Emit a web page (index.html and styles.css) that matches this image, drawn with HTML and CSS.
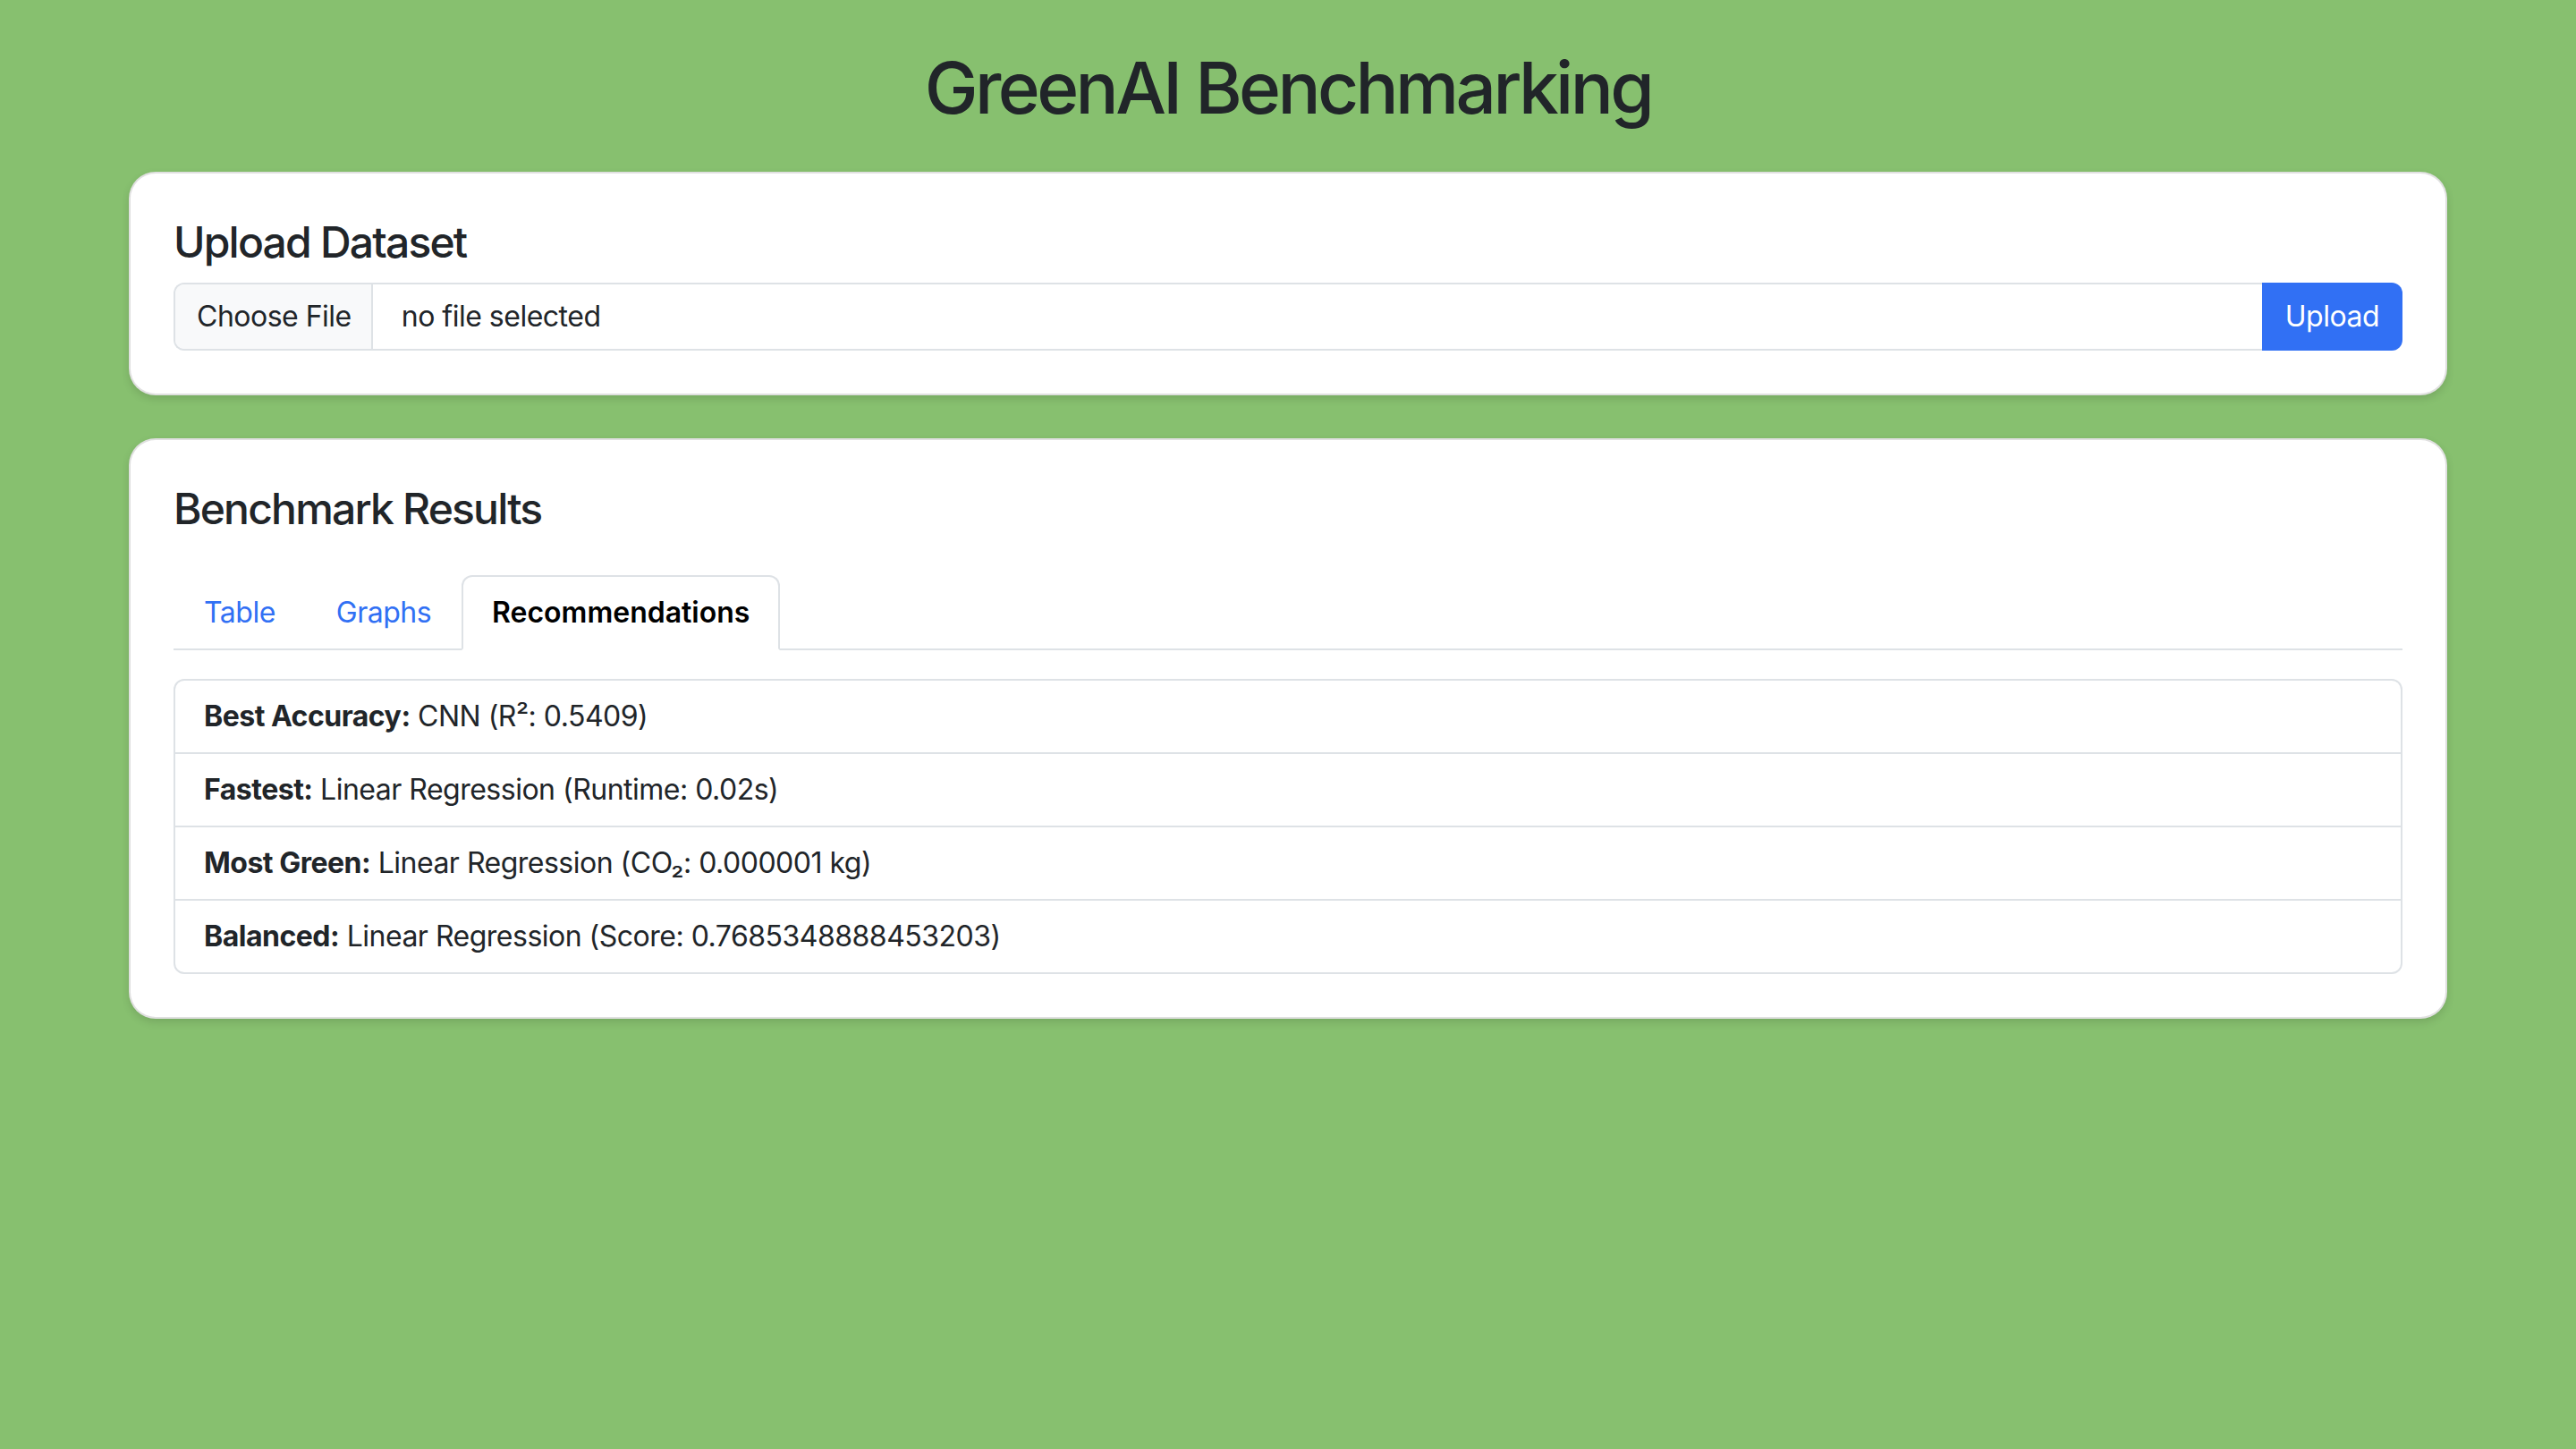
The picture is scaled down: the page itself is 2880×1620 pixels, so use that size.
FILE: index.html
```html
<!DOCTYPE html>
<html lang="en">
<head>
<meta charset="utf-8">
<title>GreenAI Benchmarking</title>
<link rel="stylesheet" href="styles.css">
</head>
<body>
<div class="container">
  <h1 class="page-title">GreenAI Benchmarking</h1>

  <section class="card">
    <h4 class="card-title">Upload Dataset</h4>
    <form class="input-group">
      <div class="file-field">
        <span class="file-btn">Choose File</span>
        <span class="file-name">no file selected</span>
      </div>
      <button type="button" class="btn-upload">Upload</button>
    </form>
  </section>

  <section class="card">
    <h4 class="card-title results-title">Benchmark Results</h4>
    <ul class="nav-tabs">
      <li><a class="nav-link" href="#">Table</a></li>
      <li><a class="nav-link" href="#">Graphs</a></li>
      <li><a class="nav-link active" href="#">Recommendations</a></li>
    </ul>
    <ul class="list-group">
      <li class="list-item"><strong>Best Accuracy:</strong> CNN (R²: 0.5409)</li>
      <li class="list-item"><strong>Fastest:</strong> Linear Regression (Runtime: 0.02s)</li>
      <li class="list-item"><strong>Most Green:</strong> Linear Regression (CO₂: 0.000001 kg)</li>
      <li class="list-item"><strong>Balanced:</strong> Linear Regression (Score: 0.7685348888453203)</li>
    </ul>
  </section>
</div>
</body>
</html>
```

FILE: styles.css
```css
* { box-sizing: border-box; }

html, body {
  margin: 0;
  padding: 0;
}

body {
  background: #87c06f;
  color: #212529;
  font-family: Inter, "Noto Sans", "Liberation Sans", sans-serif;
  font-size: 32px;
  line-height: 1.5;
  letter-spacing: -0.5px;
}

.container {
  width: 2640px;
  margin: 0 auto;
  padding: 50px 24px 0;
}

.page-title {
  margin: 0 0 46px;
  text-align: center;
  font-size: 80px;
  font-weight: 500;
  line-height: 1.2;
  letter-spacing: -3.6px;
}

.card {
  background: #fff;
  border: 2px solid rgba(0, 0, 0, 0.12);
  border-radius: 30px;
  box-shadow: 0 4px 10px rgba(0, 0, 0, 0.12);
  padding: 48px;
  margin-bottom: 48px;
}

.card-title {
  margin: 0 0 16px;
  font-size: 48px;
  font-weight: 500;
  line-height: 1.2;
  letter-spacing: -1.8px;
}

.results-title {
  margin-bottom: 46px;
}

.input-group {
  display: flex;
  height: 76px;
  margin: 0;
}

.file-field {
  flex: 1;
  display: flex;
  align-items: stretch;
  border: 2px solid #dee2e6;
  border-right: none;
  border-radius: 12px 0 0 12px;
  overflow: hidden;
}

.file-btn {
  display: flex;
  align-items: center;
  padding: 0 22px 0 24px;
  background: #f8f9fa;
  border-right: 2px solid #dee2e6;
}

.file-name {
  display: flex;
  align-items: center;
  padding-left: 32px;
}

.btn-upload {
  border: none;
  margin: 0;
  padding: 0 26px;
  background: #3170f4;
  color: #fff;
  font: inherit;
  letter-spacing: inherit;
  border-radius: 0 12px 12px 0;
  cursor: pointer;
}

.nav-tabs {
  display: flex;
  list-style: none;
  margin: 0;
  padding: 0;
  border-bottom: 2px solid #dee2e6;
}

.nav-link {
  display: block;
  margin-bottom: -2px;
  padding: 16px 32px;
  border: 2px solid transparent;
  border-radius: 12px 12px 0 0;
  color: #3170f4;
  text-decoration: none;
}

.nav-link.active {
  color: #000;
  font-weight: 600;
  letter-spacing: 0;
  background: #fff;
  border-color: #dee2e6 #dee2e6 #fff;
}

.list-group {
  list-style: none;
  margin: 32px 0 0;
  padding: 0;
  border: 2px solid #dee2e6;
  border-radius: 12px;
}

.list-item {
  padding: 16px 32px;
  border-bottom: 2px solid #dee2e6;
}

.list-item:last-child {
  border-bottom: none;
}

.list-item strong {
  font-weight: 700;
}
```
